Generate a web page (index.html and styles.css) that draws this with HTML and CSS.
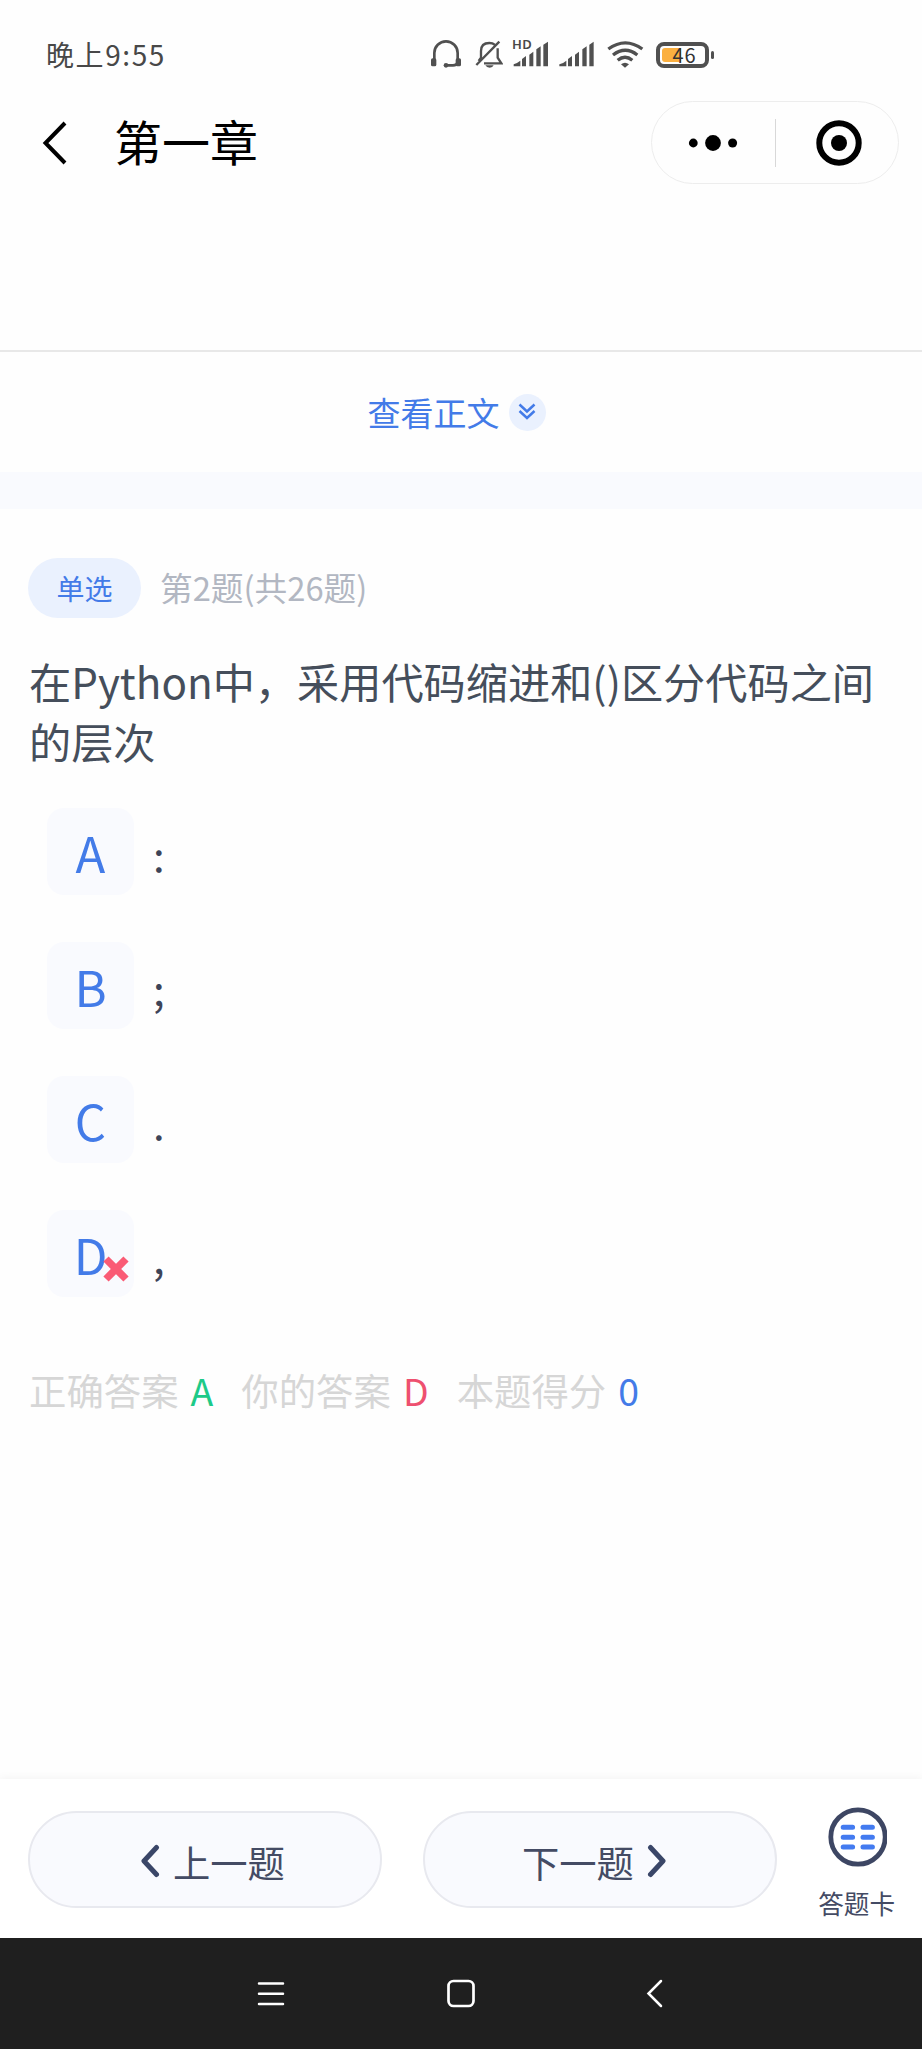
FILE: index.html
```html
<!DOCTYPE html>
<html lang="zh-CN">
<head>
<meta charset="utf-8">
<title>第一章</title>
<link rel="stylesheet" href="styles.css">
</head>
<body>
<div class="screen">
  <div class="status">
    <span class="clock">晚上9:55</span>
    <div class="status-icons">
      <svg class="ic-headset" width="32" height="30" viewBox="28 28 96 90"><path d="M41 90V70a35 35 0 0 1 70 0v20M111 98q-3 9-14 9H80" fill="none" stroke="#505050" stroke-width="8"/><rect x="31" y="86" width="16" height="24" rx="5" fill="#505050"/><rect x="105" y="86" width="16" height="24" rx="5" fill="#505050"/><circle cx="76" cy="107" r="7" fill="#505050"/></svg>
      <svg class="ic-bell" width="28" height="30" viewBox="162 28 84 90"><path d="M180 87V64q0-24 25-24 10 0 16 5M230 56v28l11 17h-52M235 36L166 106M180 84l-7 10" fill="none" stroke="#505050" stroke-width="7"/><path d="M193 107h25q-3 7-12 7t-13-7z" fill="#505050"/></svg>
      <div class="hd-signal">
        <span class="hd">HD</span>
        <svg width="36" height="26" viewBox="277 34 108 78"><path d="M279 110v-6q10-3 20-11v17zM304 110V88l12-9v31zM326 110V75l12-9v44zM347 110V59l13-9v60zM368 110V45l14-9v74z" fill="#505050"/></svg>
      </div>
      <svg class="ic-signal" width="36" height="26" viewBox="416 34 108 78"><path d="M417 110v-6q12-3 21-11v17zM443 110V88l12-9v31zM464 110V75l12-9v44zM486 110V59l13-9v60zM507 110V45l13-9v74z" fill="#505050"/></svg>
      <svg class="ic-wifi" width="38" height="28" viewBox="558 31 114 84"><path d="M565 58q51-37 102 0M579 76q37-28 73 0M593 92q22-18 44 0" fill="none" stroke="#505050" stroke-width="10"/><path d="M603 104q12-9 24 0l-12 10z" fill="#505050"/></svg>
      <div class="battery"><span class="charge"></span><span class="level">46</span></div>
    </div>
  </div>

  <header class="titlebar">
    <svg class="back" width="28" height="48" viewBox="0 0 28 48"><path d="M25 4L5.500 24 25 44" fill="none" stroke="#000" stroke-width="4"/></svg>
    <h1 class="title">第一章</h1>
    <div class="capsule">
      <svg width="50" height="20" viewBox="0 0 50 20"><circle cx="5.300" cy="10" r="4.400"/><circle cx="25" cy="10" r="7.900"/><circle cx="44.600" cy="10" r="4.500"/></svg>
      <span class="capsule-line"></span>
      <svg width="48" height="48" viewBox="0 0 48 48"><circle cx="24" cy="24" r="19.700" fill="none" stroke="#000" stroke-width="6"/><circle cx="24" cy="24" r="8"/></svg>
    </div>
  </header>

  <div class="expand">
    <span>查看正文</span>
    <i class="expand-dot"><svg width="18" height="18" viewBox="0 0 18 18"><path d="M1.500 1.500L9 8.500l7.500-7M1.500 8L9 15l7.500-7" fill="none" stroke="#437be8" stroke-width="2.500"/></svg></i>
  </div>
  <div class="band"></div>

  <main class="quiz">
    <div class="meta"><span class="tag">单选</span><span class="count">第2题(共26题)</span></div>
    <p class="question">在Python中，采用代码缩进和()区分代码之间的层次</p>
    <div class="options">
      <div class="option"><span class="letter">A</span><span class="value">:</span></div>
      <div class="option"><span class="letter">B</span><span class="value">;</span></div>
      <div class="option"><span class="letter">C</span><span class="value">.</span></div>
      <div class="option"><span class="letter">D<svg class="wrong" width="26" height="26" viewBox="0 0 26 26"><path d="M3 3l20 20M23 3L3 23" stroke="#fa5b75" stroke-width="7.400"/></svg></span><span class="value">,</span></div>
    </div>
    <div class="answers">
      <span>正确答案</span><b class="green">A</b>
      <span>你的答案</span><b class="red">D</b>
      <span>本题得分</span><b class="blue">0</b>
    </div>
  </main>

  <footer class="actions">
    <div class="btn prev"><svg width="20" height="34" viewBox="0 0 20 34"><path d="M16.500 3.500L4 17l12.500 13.500" fill="none" stroke="#3a4668" stroke-width="5" stroke-linecap="round" stroke-linejoin="round"/></svg><span>上一题</span></div>
    <div class="btn next"><span>下一题</span><svg width="20" height="34" viewBox="0 0 20 34"><path d="M3.500 3.500L16 17 3.500 30.500" fill="none" stroke="#3a4668" stroke-width="5" stroke-linecap="round" stroke-linejoin="round"/></svg></div>
    <div class="card">
      <svg width="60" height="60" viewBox="0 0 60 60"><circle cx="31" cy="30" r="27.200" fill="none" stroke="#3d4663" stroke-width="4.800"/><path d="M16.200 20.300h9.400M36 20.300h9.400M16.200 30.200h9.400M36 30.200h9.400M16.200 40h9.400M36 40h9.400" stroke="#437bf0" stroke-width="5" stroke-linecap="round"/></svg>
      <span>答题卡</span>
    </div>
  </footer>

  <nav class="sysnav">
    <svg width="28" height="30" viewBox="0 0 28 30"><path d="M2 4.500h24M2 14.700h24M2 25h24" stroke="#fff" stroke-width="2.500" stroke-linecap="round"/></svg>
    <svg width="30" height="30" viewBox="0 0 30 30"><rect x="2.500" y="2" width="25" height="25" rx="5" fill="none" stroke="#fff" stroke-width="2.700"/></svg>
    <svg width="18" height="30" viewBox="0 0 18 30"><path d="M16 2L3.500 14.500 16 27" fill="none" stroke="#fff" stroke-width="2.500" stroke-linecap="round"/></svg>
  </nav>
</div>
</body>
</html>
```

FILE: styles.css
```css
* { box-sizing: border-box; }
body { margin: 0; background: #fefefe; font-family: "Noto Sans CJK SC", sans-serif; }
svg { display: block; flex: none; }
.screen { width: 922px; height: 2049px; display: flex; flex-direction: column; overflow: hidden; }

.status { height: 96px; display: flex; align-items: flex-start; padding: 32px 0 0 46px; color: #484848; }
.clock { width: 383px; font-size: 28px; line-height: 44px; letter-spacing: 1.600px; }
.status-icons { display: flex; align-items: flex-start; padding-top: 7px; }
.ic-headset { margin-left: 1px; }
.ic-bell { margin-left: 13px; }
.hd-signal { position: relative; margin: 2px 0 0 10px; }
.hd { position: absolute; left: -1px; top: -3px; font: 600 13px/13px "Noto Sans", sans-serif; letter-spacing: 0.3px; }
.ic-signal { margin: 2px 0 0 10px; }
.ic-wifi { margin: 1px 0 0 11px; }
.battery { position: relative; width: 53px; height: 26px; margin: 3px 0 0 12px; border: 4px solid #505050; border-radius: 8px; display: flex; align-items: center; justify-content: center; }
.battery::after { content: ""; position: absolute; right: -9px; top: 5px; width: 3px; height: 8px; background: #505050; border-radius: 2px; }
.charge { position: absolute; left: 2px; top: 2px; width: 19px; height: 14px; border-radius: 3px 0 0 3px; background: #fbb040; }
.level { position: relative; left: 2px; font-size: 20px; line-height: 20px; letter-spacing: 1px; color: #333; }

.titlebar { height: 254px; display: flex; align-items: flex-start; padding: 5px 23px 0 40px; }
.back { margin-top: 18px; }
.title { margin: 3px 0 0 46px; font-size: 48px; font-weight: 400; line-height: 72px; color: #000; letter-spacing: 0; }
.capsule { width: 248px; height: 83px; margin-left: auto; border: 1px solid #ededed; border-radius: 42px; display: flex; align-items: center; padding-left: 36px; }
.capsule-line { width: 1px; height: 48px; background: #d8d8d8; margin: 0 39px 0 37px; }

.expand { height: 122px; border-top: 2px solid #e8e8e8; display: flex; justify-content: center; align-items: center; gap: 9px; font-size: 33px; line-height: 48px; color: #437be8; padding: 0 9px 0 0; }
.expand-dot { width: 37px; height: 37px; border-radius: 50%; background: #eaf1fe; display: flex; align-items: center; justify-content: center; }
.band { height: 37px; background: #f9fafe; }

.quiz { height: 1270px; padding: 49px 28px 0; }
.meta { display: flex; align-items: center; height: 60px; }
.tag { width: 113px; height: 60px; border-radius: 30px; background: #eaf1fe; color: #437be8; font-size: 28px; line-height: 60px; text-align: center; }
.count { margin: -2px 0 0 19px; font-size: 32.700px; line-height: 60px; color: #b2b7c2; }
.question { margin: 33px -1px 0 1px; font-size: 42.200px; line-height: 59.700px; color: #454e5b; word-break: break-all; }
.options { display: grid; gap: 47px; margin: 38px 0 0 19px; }
.option { display: flex; align-items: center; height: 87px; }
.letter { position: relative; width: 87px; height: 87px; border-radius: 17px; background: #f9fafe; color: #437be8; font-size: 49px; line-height: 87px; text-align: center; }
.wrong { position: absolute; left: 56px; top: 46px; }
.value { margin: 4px 0 0 19px; font-size: 42px; line-height: 92px; color: #3d4458; }
.answers { display: flex; margin: 61px 0 0 1px; font-size: 37.400px; line-height: 64px; color: #d6d6d6; }
.answers b { font-weight: 400; margin: 0 28px 0 12px; }
.answers .green { color: #1dca88; }
.answers .red { color: #ee506f; }
.answers .blue { color: #437be8; }

.actions { height: 159px; background: #fff; box-shadow: 0 -2px 8px rgba(0,0,0,.04); display: flex; align-items: flex-start; padding: 32px 27px 0 28px; }
.btn { width: 354px; height: 97px; border: 2px solid #e8e9ef; border-radius: 49px; background: #f9fafe; color: #444b64; display: flex; align-items: center; font-size: 37.300px; line-height: 97px; }
.btn svg { margin-top: 3px; }
.btn span { margin-top: 5px; }
.prev { padding-left: 110px; gap: 13px; }
.next { margin-left: 41px; padding-left: 97px; gap: 13px; }
.card { margin: -4px 0 0 auto; display: flex; flex-direction: column; align-items: center; font-size: 25.600px; line-height: 38px; color: #444b64; }
.card span { margin-top: 17px; }

.sysnav { height: 111px; background: #1f1f1f; display: flex; align-items: center; padding-left: 257px; }
.sysnav svg:nth-child(2) { margin-left: 161px; }
.sysnav svg:nth-child(3) { margin-left: 169px; }
```
